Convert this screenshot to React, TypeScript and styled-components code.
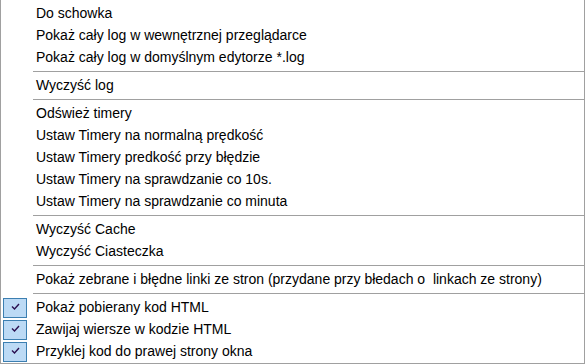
import React from "react";
import styled, { createGlobalStyle } from "styled-components";

type Entry =
	| { kind: "item"; label: string; checked?: boolean }
	| { kind: "sep" };

const entries: Entry[] = [
	{ kind: "item", label: "Do schowka" },
	{ kind: "item", label: "Pokaż cały log w wewnętrznej przeglądarce" },
	{ kind: "item", label: "Pokaż cały log w domyślnym edytorze *.log" },
	{ kind: "sep" },
	{ kind: "item", label: "Wyczyść log" },
	{ kind: "sep" },
	{ kind: "item", label: "Odśwież timery" },
	{ kind: "item", label: "Ustaw Timery na normalną prędkość" },
	{ kind: "item", label: "Ustaw Timery predkość przy błędzie" },
	{ kind: "item", label: "Ustaw Timery na sprawdzanie co 10s." },
	{ kind: "item", label: "Ustaw Timery na sprawdzanie co minuta" },
	{ kind: "sep" },
	{ kind: "item", label: "Wyczyść Cache" },
	{ kind: "item", label: "Wyczyść Ciasteczka" },
	{ kind: "sep" },
	{
		kind: "item",
		label:
			"Pokaż zebrane i błędne linki ze stron (przydane przy błedach o  linkach ze strony)",
	},
	{ kind: "sep" },
	{ kind: "item", label: "Pokaż pobierany kod HTML", checked: true },
	{ kind: "item", label: "Zawijaj wiersze w kodzie HTML", checked: true },
	{ kind: "item", label: "Przyklej kod do prawej strony okna", checked: true },
];

const App = () => {
	return (
		<>
			<GlobalStyle />
			<Menu>
				{entries.map((e, i) =>
					e.kind === "sep" ? (
						<Separator key={i} />
					) : (
						<Item key={i}>
							<Gutter>
								{e.checked && (
									<CheckBox>
										<svg width="9" height="7" viewBox="0 0 9 7">
											<path
												d="M1 3.5 L3.5 6 L8 1"
												fill="none"
												stroke="#2b1050"
												strokeWidth="1.4"
											/>
										</svg>
									</CheckBox>
								)}
							</Gutter>
							<Label>{e.label}</Label>
						</Item>
					)
				)}
			</Menu>
		</>
	);
};

export default App;

const GlobalStyle = createGlobalStyle`
	html, body {
		margin: 0;
		padding: 0;
		background: #ffffff;
	}
`;

const Menu = styled.div`
	width: 585px;
	height: 364px;
	box-sizing: border-box;
	background: #ffffff;
	border: 1px solid #a0a0a0;
	border-top: none;
	padding-top: 3px;
	display: flex;
	flex-direction: column;
	font-family: "Liberation Sans", Arial, sans-serif;
	font-size: 14px;
	color: #000000;
	overflow: hidden;
`;

const Item = styled.div`
	height: 22px;
	display: flex;
	align-items: center;
`;

const Gutter = styled.div`
	width: 35px;
	height: 22px;
	display: flex;
	align-items: center;
	padding-left: 2px;
	box-sizing: border-box;
`;

const CheckBox = styled.div`
	width: 24px;
	height: 20px;
	box-sizing: border-box;
	border: 1px solid #3c7fb1;
	background: #bcdaf5;
	display: flex;
	align-items: center;
	justify-content: center;
	padding-bottom: 3px;
`;

const Label = styled.div`
	white-space: pre;
	line-height: 22px;
	padding-bottom: 3px;
`;

const Separator = styled.div`
	height: 1px;
	margin: 2px 0 3px 32px;
	background: #a0a0a0;
`;
